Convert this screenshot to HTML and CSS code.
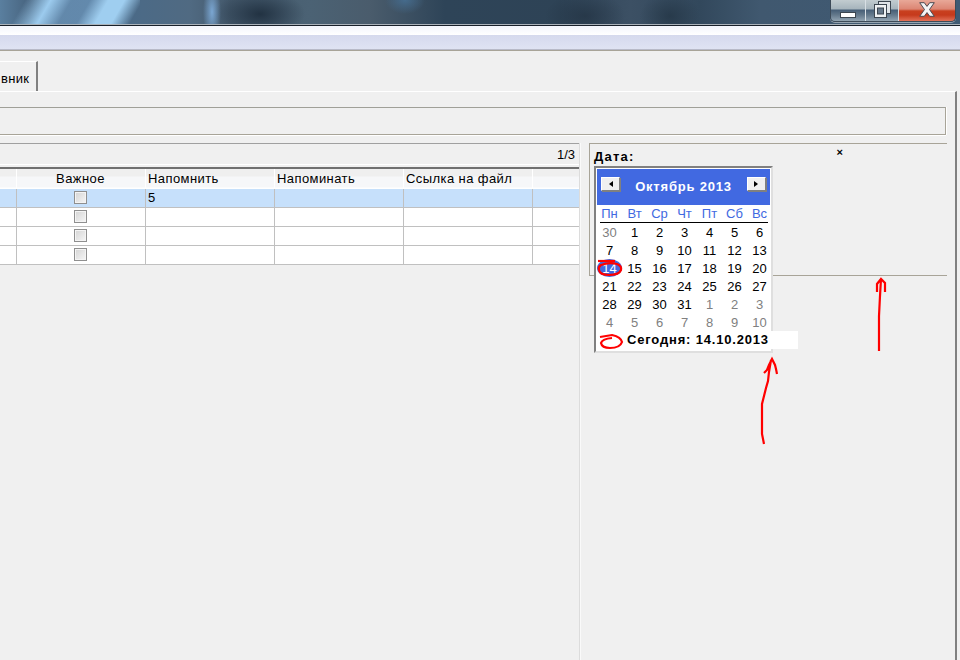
FILE: index.html
```html
<!DOCTYPE html>
<html lang="ru">
<head>
<meta charset="utf-8">
<title>Дневник</title>
<link rel="stylesheet" href="styles.css">
</head>
<body>
<div class="screen">
  <header class="titlebar">
    <div class="controls">
      <div class="ctl ctl-min">
        <svg width="16" height="6" viewBox="0 0 16 6"><rect x="0.5" y="0.5" width="15" height="5" fill="#fff" stroke="#3c4650"/></svg>
      </div>
      <div class="ctl ctl-max">
        <svg width="18" height="18" viewBox="0 0 18 18"><rect x="5.5" y="1.5" width="12" height="12" fill="#dfe4e8" stroke="#3c4650"/><rect x="1.5" y="4.5" width="12" height="13" fill="#eef1f3" stroke="#3c4650"/><rect x="4.5" y="8" width="6" height="6" fill="#66788a" stroke="#3c4650"/></svg>
      </div>
      <div class="ctl ctl-close">
        <svg width="16" height="15" viewBox="0 0 16 15"><path d="M0.7 0.7H5.3L8 4.4 10.7 0.7H15.3L10.5 7.5 15.3 14.3H10.7L8 10.6 5.3 14.3H0.7L5.5 7.5Z" fill="#f4f4f4" stroke="#4a4a52"/></svg>
      </div>
    </div>
  </header>
  <div class="toolbar"></div>
  <div class="tabstrip">
    <div class="tab"><span>вник</span></div>
  </div>
  <div class="pane">
    <div class="field"></div>
    <div class="main">
      <section class="left">
        <div class="pager">1/3</div>
        <div class="grid">
          <div class="hd"></div><div class="hd hd-c">Важное</div><div class="hd">Напомнить</div><div class="hd">Напоминать</div><div class="hd">Ссылка на файл</div><div class="hd"></div>

          <div class="c sel"></div><div class="c sel cc"><i class="chk"></i></div><div class="c sel">5</div><div class="c sel"></div><div class="c sel"></div><div class="c sel"></div>
          <div class="c"></div><div class="c cc"><i class="chk"></i></div><div class="c"></div><div class="c"></div><div class="c"></div><div class="c"></div>
          <div class="c"></div><div class="c cc"><i class="chk"></i></div><div class="c"></div><div class="c"></div><div class="c"></div><div class="c"></div>
          <div class="c"></div><div class="c cc"><i class="chk"></i></div><div class="c"></div><div class="c"></div><div class="c"></div><div class="c"></div>
        </div>
      </section>
      <div class="splitter"></div>
      <section class="right">
        <div class="datebox">
          <div class="datehead"><b>Дата:</b><b class="closex">×</b></div>
          <div class="cal">
            <div class="cal-top">
              <div class="navbtn"><i class="tri tri-l"></i></div>
              <div class="cal-title">Октябрь 2013</div>
              <div class="navbtn"><i class="tri tri-r"></i></div>
            </div>
            <div class="week"><span>Пн</span><span>Вт</span><span>Ср</span><span>Чт</span><span>Пт</span><span>Сб</span><span>Вс</span></div>
            <div class="days">
              <span class="off">30</span><span>1</span><span>2</span><span>3</span><span>4</span><span>5</span><span>6</span>
              <span>7</span><span>8</span><span>9</span><span>10</span><span>11</span><span>12</span><span>13</span>
              <span class="cur">14</span><span>15</span><span>16</span><span>17</span><span>18</span><span>19</span><span>20</span>
              <span>21</span><span>22</span><span>23</span><span>24</span><span>25</span><span>26</span><span>27</span>
              <span>28</span><span>29</span><span>30</span><span>31</span><span class="off">1</span><span class="off">2</span><span class="off">3</span>
              <span class="off">4</span><span class="off">5</span><span class="off">6</span><span class="off">7</span><span class="off">8</span><span class="off">9</span><span class="off">10</span>
            </div>
            <div class="today">Сегодня: 14.10.2013</div>
          </div>
        </div>
      </section>
    </div>
  </div>
  <svg class="ink" width="960" height="660" viewBox="0 0 960 660" fill="none" stroke="#f00" stroke-width="2.2">
    <path d="M598 261H615"/>
    <path d="M601 265Q609 262 617 264Q622 266 621 270Q619 275 609 275Q600 275 599 270Q598 267 601 265Z"/>
    <path d="M600 337L612 335Q621 337 622 342Q620 348 610 348Q602 348 601 343Q602 339 612 338"/>
    <path d="M879 351V316L880 296 881 279M877 292V284L881 279 885 283V292"/>
    <path d="M764 444 762 434V404L764 396 766 388 768 381 769 372 771 360M764 373 767 370 769 365 772 359 775 365 776 369 777 374"/>
  </svg>
</div>
</body>
</html>
```
FILE: styles.css
```css
* { box-sizing: border-box; }
html, body { margin: 0; padding: 0; }
body { background: #f0f0f0; font-family: "Liberation Sans", Arial, sans-serif; font-size: 13px; color: #000; }
.screen { position: relative; width: 960px; height: 660px; overflow: hidden; display: flex; flex-direction: column; }

.titlebar {
  height: 26px; flex: none; display: flex; justify-content: flex-end; align-items: flex-start; padding-right: 4px;
  border-bottom: 1px solid #18202a; box-shadow: inset 0 -1px 0 #aab2ba;
  background:
    linear-gradient(120deg, rgba(156,203,238,0) 22px, #9ccbee 44px, rgba(120,165,205,.55) 62px, rgba(120,165,205,.55) 78px, #9fcef0 94px, #9fcef0 108px, rgba(159,206,240,0) 124px) no-repeat 0 0 / 140px 100%,
    radial-gradient(ellipse 9px 30px at 212px 12px, rgba(125,170,215,.95), rgba(125,170,215,0) 100%),
    radial-gradient(ellipse 45px 24px at 260px 14px, rgba(32,48,64,.95), rgba(32,48,64,0) 100%),
    radial-gradient(ellipse 20px 14px at 405px 0, rgba(70,110,145,.9), rgba(70,110,145,0) 100%),
    radial-gradient(ellipse 40px 24px at 585px 16px, rgba(34,50,66,.7), rgba(34,50,66,0) 100%),
    radial-gradient(ellipse 30px 24px at 670px 16px, rgba(36,54,70,.8), rgba(36,54,70,0) 100%),
    linear-gradient(90deg, #5a7f9f 0, #47637e 30px, #4a6a88 120px, #506a82 190px, #44596c 230px, #4b6274 310px, #4a5c6c 370px, #2e4458 445px, #2e4356 560px, #3c5064 630px, #32485c 700px, #40586f 760px, #3f5a74 960px);
}
.controls { display: flex; height: 22px; border: 1px solid #3c4a58; border-top: 0; border-radius: 0 0 5px 5px; overflow: hidden; box-shadow: 0 1px 0 rgba(255,255,255,.45); }
.ctl { display: flex; align-items: center; justify-content: center; height: 21px; border-right: 1px solid #d8dfe4; }
.ctl-min { width: 35px; padding-top: 8px; background: linear-gradient(#c2ccd0 0, #a6b4bc 9px, #465e76 10px, #64798c 15px, #92a4b2 21px); }
.ctl-max { width: 33px; background: linear-gradient(#c2ccd0 0, #a6b4bc 9px, #465e76 10px, #64798c 15px, #92a4b2 21px); padding-bottom: 3px; }
.ctl-close { width: 56px; border-right: 0; padding-bottom: 3px; background: linear-gradient(#e8a898 0, #dc8674 9px, #c8401f 11px, #c63a1c 15px, #e07058 21px); }

.toolbar { height: 25px; flex: none; border-bottom: 1px solid #a8a498; box-shadow: inset 0 -1px 0 #b8bac8; background: linear-gradient(#f3f5fc 0, #ffffff 9px, #d5d9ed 9px, #dfe3f3 23px); }

.tabstrip { height: 40px; flex: none; padding-top: 10px; }
.tab { width: 38px; height: 30px; display: flex; align-items: center; white-space: nowrap; border-top: 1px solid #fff; border-right: 2px solid #808080; padding: 4px 0 0 1px; letter-spacing: .3px; }

.pane { flex: 1; width: 957px; display: flex; flex-direction: column; border-top: 1px solid #fff; border-right: 2px solid #808080; }
.field { height: 28px; flex: none; width: 946px; margin-top: 15px; border-top: 1px solid #a0a098; border-bottom: 1px solid #a8a498; border-right: 1px solid #a8a498; box-shadow: 0 1px 0 #fff, 1px 0 0 #fff; }
.main { flex: 1; display: flex; margin-top: 8px; min-height: 0; }

.left { width: 579px; flex: none; }
.pager { height: 24px; border-top: 1px solid #a0a0a0; padding: 3px 4px 0 0; text-align: right; line-height: 16px; background: linear-gradient(#fff, #fff) no-repeat 0 20px / 100% 1px; }
.grid { display: grid; grid-template-columns: 17px 129px 129px 129px 129px 46px; grid-template-rows: 20px; grid-auto-rows: 19px; border-top: 2px solid #707070; }
.hd { height: 20px; padding-left: 2px; line-height: 20px; letter-spacing: .42px; white-space: nowrap; border-right: 1px solid #fff; background: linear-gradient(#efefef 0, #efefef 7px, #f6f7f9 8px, #f6f7f9 18px, #fff 19px); }
.hd-c { text-align: center; padding: 0 1px 0 0; }
.c { background: #fff; border-right: 1px solid #c0c0c0; border-bottom: 1px solid #c0c0c0; padding-left: 2px; line-height: 18px; }
.c:nth-child(6n) { border-right: 0; }
.hd:nth-child(6) { border-right: 0; }
.sel { background: #c6e0fb; }
.cc { display: flex; align-items: flex-start; justify-content: center; padding: 2px 1px 0 0; }
.chk { display: block; width: 13px; height: 13px; border: 1px solid #8f8f8f; box-shadow: inset 0 0 0 1px #f4f4f4; background: linear-gradient(135deg, #d4d4d4, #f6f6f6); }

.splitter { width: 2px; flex: none; background: #dcdcdc; border-right: 1px solid #fafafa; }
.right { flex: 1; padding-left: 8px; min-width: 0; }
.datebox { position: relative; width: 358px; height: 133px; border-top: 1px solid #a8a498; border-bottom: 1px solid #a8a498; border-left: 1px solid #a8a498; }
.datehead { display: flex; justify-content: space-between; padding: 6px 0 0 4px; width: 254px; line-height: 14px; letter-spacing: 1.2px; }
.closex { font-size: 11px; line-height: 5px; }
.cal { position: absolute; left: 4px; top: 22px; width: 179px; height: 187px; background: #fff; border: 2px solid; border-color: #808080 #dfdfdf #dfdfdf #808080; padding: 1px; }
.cal-top { height: 36px; background: #4169e1; display: flex; justify-content: space-between; align-items: flex-start; padding: 8px 4px 0 4px; }
.navbtn { width: 19px; height: 14px; background: #f0f0f0; border: 1px solid; border-color: #fff #808080 #808080 #fff; box-shadow: 1px 1px 0 #808080; display: flex; align-items: center; justify-content: center; }
.tri { display: block; width: 0; height: 0; border: 3px solid transparent; border-left-width: 0; border-right: 4px solid #000; }
.tri-r { border-right-width: 0; border-left: 4px solid #000; }
.cal-title { color: #fff; font-weight: bold; letter-spacing: .8px; line-height: 20px; }
.week { display: grid; grid-template-columns: repeat(7, 25px); height: 18px; line-height: 18px; text-align: center; color: #4169e1; background: linear-gradient(#000, #000) no-repeat 3px 17px / 168px 1px; }
.days { display: grid; grid-template-columns: repeat(7, 25px); grid-auto-rows: 18px; line-height: 20px; text-align: center; }
.off { color: #808080; }
.cur { background: #4169e1; color: #fff; border-radius: 50%; }
.today { width: 201px; height: 18px; background: #fff; padding-left: 30px; font-weight: bold; letter-spacing: .82px; line-height: 17px; white-space: nowrap; }

.ink { position: absolute; left: 0; top: 0; pointer-events: none; }
```
